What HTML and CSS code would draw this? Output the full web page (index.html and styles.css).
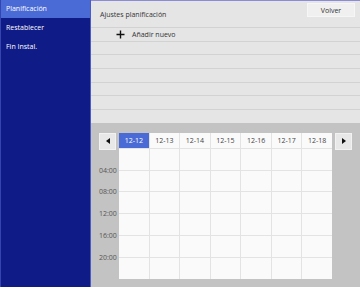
FILE: index.html
```html
<!DOCTYPE html>
<html lang="es">
<head>
  <meta charset="UTF-8">
  <meta name="viewport" content="width=device-width, initial-scale=1.0">
  <title>Ajustes planificación</title>
  <link rel="stylesheet" href="styles.css">
</head>
<body>
  <div class="app">
    <nav class="sidebar">
      <div class="menu-item active">Planificación</div>
      <div class="menu-item">Restablecer</div>
      <div class="menu-item">Fin Instal.</div>
    </nav>
    <main class="main">
      <div class="settings">
        <div class="settings-head">
          <span class="title">Ajustes planificación</span>
          <button class="btn">Volver</button>
        </div>
        <div class="row add-row">
          <svg class="plus" width="9" height="9" viewBox="0 0 9 9"><path d="M4.5 0.5v8M0.5 4.5h8" stroke="#111" stroke-width="1.4"/></svg>
          <span>Añadir nuevo</span>
        </div>
        <div class="row"></div>
        <div class="row"></div>
        <div class="row"></div>
        <div class="row"></div>
        <div class="row"></div>
        <div class="row"></div>
      </div>
      <section class="calendar">
        <div class="times">
          <button class="nav-btn"><svg width="4" height="6" viewBox="0 0 4 6"><path d="M4 0v6L0 3z" fill="#111"/></svg></button>
          <span class="time"><span>04:00</span></span>
          <span class="time"><span>08:00</span></span>
          <span class="time"><span>12:00</span></span>
          <span class="time"><span>16:00</span></span>
          <span class="time"><span>20:00</span></span>
          <span class="time"></span>
        </div>
        <div class="days">
          <div class="day selected">12-12</div>
          <div class="day">12-13</div>
          <div class="day">12-14</div>
          <div class="day">12-15</div>
          <div class="day">12-16</div>
          <div class="day">12-17</div>
          <div class="day">12-18</div>
        </div>
        <button class="nav-btn next"><svg width="4" height="6" viewBox="0 0 4 6"><path d="M0 0v6L4 3z" fill="#111"/></svg></button>
      </section>
    </main>
  </div>

  <script>
    // celdas vacías de la semana
    const days = document.querySelector('.days');
    for (let i = 0; i < 42; i++) {
      const cell = document.createElement('div');
      cell.className = 'cell';
      days.appendChild(cell);
    }
  </script>
</body>
</html>
```

FILE: styles.css
```css
/* Estilos generales */
body {
  font-family: 'Open Sans', sans-serif;
  margin: 0;
  padding: 0;
  font-size: 7px;
  color: #333;
}
.app {
  display: flex;
  width: 360px;
  height: 287px;
  overflow: hidden;
}
.sidebar {
  width: 91px;
  box-sizing: border-box;
  background-color: #0f1b86;
  border-right: 1px solid #4c5cc4;
  border-left: 1px solid #3444b0;
}
.menu-item {
  height: 19px;
  line-height: 18px;
  padding-left: 5px;
  color: #fff;
}
.menu-item.active {
  height: 18px;
  margin-bottom: 1px;
  background-color: #4a6bd6;
}
.main {
  flex: 1;
  display: flex;
  flex-direction: column;
  background-color: #e5e5e5;
  border-top: 1px solid #8c8cd6;
}
.settings-head {
  height: 26px;
  display: flex;
  align-items: center;
  justify-content: space-between;
  padding: 0 5px 0 9px;
}
.btn {
  width: 48px;
  height: 14px;
  margin-top: -8px;
  padding: 0;
  font-family: inherit;
  font-size: 7px;
  color: #333;
  background-color: #f0f0f0;
  border: 1px solid #f6f6f6;
}
.row {
  height: 13.7px;
  box-sizing: border-box;
  border-top: 1px solid #d2d2d2;
}
.add-row {
  display: flex;
  align-items: center;
  padding-left: 25px;
}
.add-row .plus {
  margin-right: 7px;
}
.calendar {
  flex: 1;
  display: flex;
  align-items: flex-start;
  background-color: #c3c3c3;
  padding: 10px 0 0 8px;
}
.times {
  width: 17px;
  height: 146px;
  margin-right: 3px;
  display: grid;
  grid-template-rows: 15px repeat(6, 1fr);
  row-gap: 1px;
}
.nav-btn {
  width: 17px;
  height: 17px;
  padding: 0;
  display: flex;
  align-items: center;
  justify-content: center;
  background-color: #e8e8e8;
  border: 1px solid #f2f2f2;
}
.nav-btn.next {
  margin-left: 3px;
}
.time {
  display: flex;
  justify-content: flex-end;
  align-items: flex-end;
  color: #555;
}
.time span {
  transform: translateY(55%);
  white-space: nowrap;
}
.days {
  width: 213px;
  height: 146px;
  display: grid;
  grid-template-columns: repeat(7, 1fr);
  grid-template-rows: 15px repeat(6, 1fr);
  gap: 1px;
  background-color: #e3e3e3;
}
.day {
  display: flex;
  align-items: center;
  justify-content: center;
  background-color: #fafafa;
  color: #444;
}
.day.selected {
  background-color: #4a6bd6;
  color: #fff;
}
.cell {
  background-color: #fafafa;
}
```
